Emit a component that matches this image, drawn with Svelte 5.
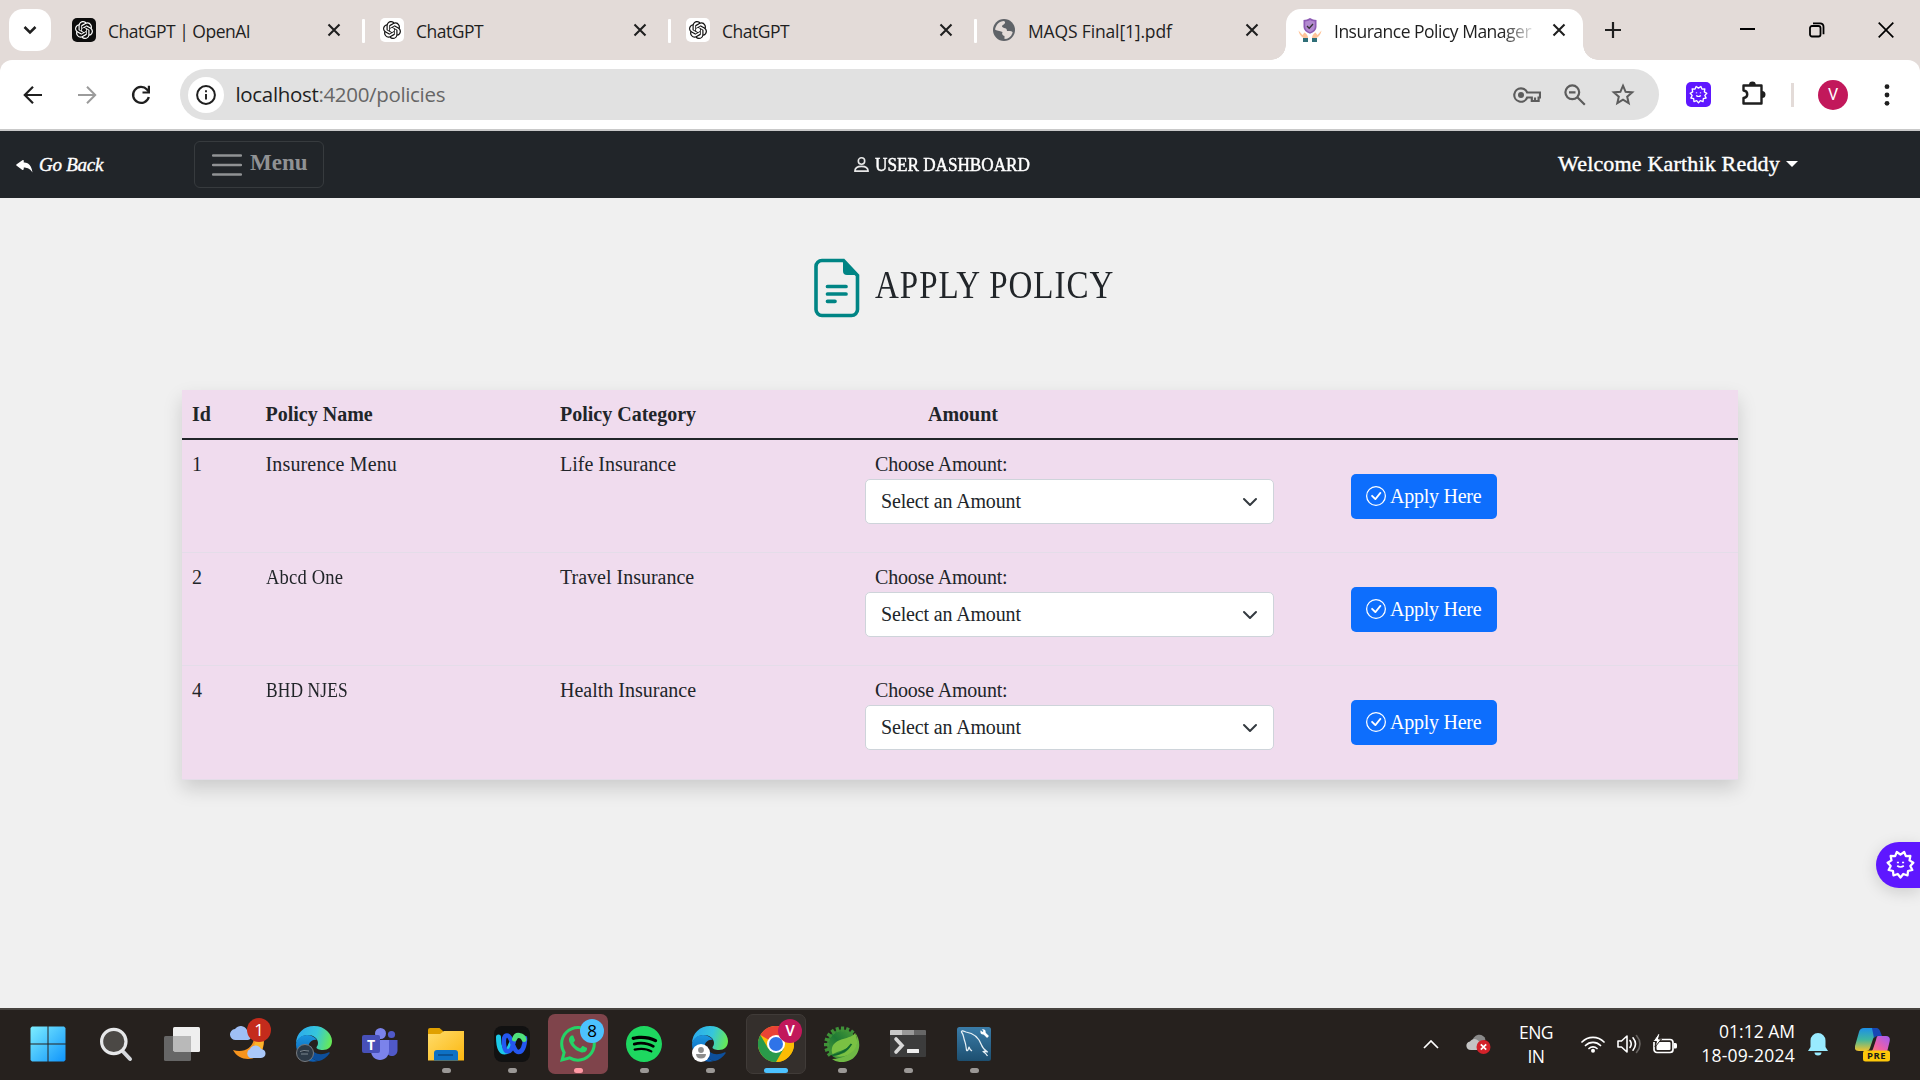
<script>
  const tabs = [
    { title: 'ChatGPT | OpenAI', icon: 'dark' },
    { title: 'ChatGPT', icon: 'light' },
    { title: 'ChatGPT', icon: 'light' },
    { title: 'MAQS Final[1].pdf', icon: 'globe' }
  ];
  const policies = [
    { id: 1, name: 'Insurence Menu', category: 'Life Insurance', condense: 1 },
    { id: 2, name: 'Abcd One', category: 'Travel Insurance', condense: 0.93 },
    { id: 4, name: 'BHD NJES', category: 'Health Insurance', condense: 0.87 }
  ];
  const openai =
    'M22.2819 9.8211a5.9847 5.9847 0 0 0-.5157-4.9108 6.0462 6.0462 0 0 0-6.5098-2.9A6.0651 6.0651 0 0 0 4.9807 4.1818a5.9847 5.9847 0 0 0-3.9977 2.9 6.0462 6.0462 0 0 0 .7427 7.0966 5.98 5.98 0 0 0 .511 4.9107 6.051 6.051 0 0 0 6.5146 2.9001A5.9847 5.9847 0 0 0 13.2599 24a6.0557 6.0557 0 0 0 5.7718-4.2058 5.9894 5.9894 0 0 0 3.9977-2.9001 6.0557 6.0557 0 0 0-.7475-7.0729zm-9.022 12.6081a4.4755 4.4755 0 0 1-2.8764-1.0408l.1419-.0804 4.7783-2.7582a.7948.7948 0 0 0 .3927-.6813v-6.7369l2.02 1.1686a.071.071 0 0 1 .038.052v5.5826a4.504 4.504 0 0 1-4.4945 4.4944zm-9.6607-4.1254a4.4708 4.4708 0 0 1-.5346-3.0137l.142.0852 4.783 2.7582a.7712.7712 0 0 0 .7806 0l5.8428-3.3685v2.3324a.0804.0804 0 0 1-.0332.0615L9.74 19.9502a4.4992 4.4992 0 0 1-6.1408-1.6464zM2.3408 7.8956a4.485 4.485 0 0 1 2.3655-1.9728V11.6a.7664.7664 0 0 0 .3879.6765l5.8144 3.3543-2.0201 1.1685a.0757.0757 0 0 1-.071 0l-4.8303-2.7865A4.504 4.504 0 0 1 2.3408 7.872zm16.5963 3.8558L13.1038 8.364 15.1192 7.2a.0757.0757 0 0 1 .071 0l4.8303 2.7913a4.4944 4.4944 0 0 1-.6765 8.1042v-5.6772a.79.79 0 0 0-.407-.667zm2.0107-3.0231l-.142-.0852-4.7735-2.7818a.7759.7759 0 0 0-.7854 0L9.409 9.2297V6.8974a.0662.0662 0 0 1 .0284-.0615l4.8303-2.7866a4.4992 4.4992 0 0 1 6.6802 4.66zM8.3065 12.863l-2.02-1.1638a.0804.0804 0 0 1-.038-.0567V6.0742a4.4992 4.4992 0 0 1 7.3757-3.4537l-.142.0805L8.704 5.459a.7948.7948 0 0 0-.3927.6813zm1.0976-2.3654l2.602-1.4998 2.6069 1.4998v2.9994l-2.5974 1.4997-2.6067-1.4997Z';
  // Rounded burst with eleven points, used by the extension badge.
  const burst = Array.from({ length: 22 }, (_, i) => {
    const a = (Math.PI * i) / 11 + Math.PI / 2;
    const r = i % 2 ? 9.6 : 12.6;
    return `${(15 + r * Math.cos(a)).toFixed(2)},${(15 + r * Math.sin(a)).toFixed(2)}`;
  }).join(' ');
  const teeth = Array.from({ length: 10 }, (_, i) => 142 + i * 18.5);
</script>

{#snippet closeIcon()}
  <svg class="x" width="14" height="14" viewBox="0 0 14 14"><path d="M1.5 1.5l11 11M12.5 1.5l-11 11" stroke="#1f1f1f" stroke-width="2.1" fill="none" /></svg>
{/snippet}

{#snippet edge(id)}
  <svg width="36" height="36" viewBox="0 0 36 36">
    <defs>
      <linearGradient id={id + 'a'} x1="0" y1=".3" x2="1" y2=".5"><stop offset="0" stop-color="#2aa9ee" /><stop offset=".55" stop-color="#36c6dc" /><stop offset="1" stop-color="#66e957" /></linearGradient>
      <linearGradient id={id + 'b'} x1="0" y1="0" x2="0" y2="1"><stop offset="0" stop-color="#1a96e0" /><stop offset="1" stop-color="#0c5bb0" /></linearGradient>
    </defs>
    <path d="M0 18C0 7 8 0 18 0c11 0 18 8 18 15 0 6-4 9-9 9-4 0-6.500-1.200-6.500-2.500 0-1 1.500-1.500 1.500-4.500 0-5-5-8-10-8C6 9 1 13 0 18z" fill="url(#{id}a)" />
    <path d="M0 18c1-6 6-9 11-9 4 0 8 2 10 5-6-1-9 4-9 9 0 7 5 11 10 12-12 3-22-5-22-17z" fill="url(#{id}b)" />
    <path d="M12.500 22c-.5 8 5 13 10.500 13 4-1 8-4 10.500-7.500.5-1-.3-1.500-1.300-1-8 3.500-16 1.500-17-6.500z" fill="#0d4f9b" />
  </svg>
{/snippet}

<div class="screen">
  <div class="tabstrip">
    <div class="search-tabs">
      <svg width="14" height="10" viewBox="0 0 14 10"><path d="M1.500 2l5.500 5.500L12.500 2" stroke="#1f1f1f" stroke-width="2.500" fill="none" /></svg>
    </div>
    {#each tabs as tab, i}
      <div class="tab" class:first={i === 0} class:pdf={tab.icon === 'globe'}>
        {#if tab.icon === 'globe'}
          <svg width="24" height="24" viewBox="0 0 24 24"><circle cx="12" cy="12" r="11" fill="#5f6368" /><path d="M12 3c2 1 1 3-1 4s-1 2 1 3c2 0 3 1 3 3h3c2 0 3 1 2.500 2C19 19 16 21 12.500 21v-3c-2-.5-3-2-2-4-3-1-6-1.500-7.500-2.500C4 7 7 3 12 3z" fill="#e3dbd8" /></svg>
        {:else}
          <svg width="24" height="24" viewBox="0 0 24 24"><rect width="24" height="24" rx="5" fill={tab.icon === 'dark' ? '#0d0d0d' : '#fff'} /><path transform="translate(3 3) scale(.75)" d={openai} fill={tab.icon === 'dark' ? '#fff' : '#111'} /></svg>
        {/if}
        <span class="title">{tab.title}</span>
        {@render closeIcon()}
        {#if i < 3}<i class="sep"></i>{/if}
      </div>
    {/each}
    <div class="tab active">
      <svg width="24" height="24" viewBox="0 0 24 24">
        <path d="M12 0c2 1.300 4 2 6.500 2v7c0 3-2.500 5.200-6.500 6.700C8 14.200 5.500 12 5.500 9V2C8 2 10 1.300 12 0z" fill="#8e5bb5" /><path d="M12 2c2 1 3 1.300 4.800 1.500V9c0 2-2 4-4.800 5.200C9.200 13 7.200 11 7.200 9V3.500C9 3.300 10 3 12 2z" fill="#b38ad0" />
        <path d="M9 8l2.200 2.200L15 6" stroke="#333" stroke-width="1.300" fill="none" />
        <path d="M.5 12.500l4 4.500 2-2.500c2 1 3.500 3 3.500 5.500H5.500C2.500 18 1 16 .5 12.500zM23.500 12.500l-4 4.500-2-2.500c-2 1-3.500 3-3.500 5.500h4.500c3-2 4.500-4 5-7.500z" fill="#ffc49a" />
        <path d="M5 20h5v4H5zM14 20h5v4h-5z" fill="#2f6f78" />
      </svg>
      <span class="title fade">Insurance Policy Manager</span>
      {@render closeIcon()}
    </div>
    <svg class="plus" width="16" height="16" viewBox="0 0 16 16"><path d="M8 0v16M0 8h16" stroke="#1f1f1f" stroke-width="2.200" /></svg>
    <div class="window-controls">
      <svg width="16" height="16" viewBox="0 0 16 16"><path d="M0 7h15" stroke="#000" stroke-width="2" /></svg>
      <svg width="16" height="16" viewBox="0 0 16 16"><rect x="1" y="4" width="10.500" height="10.500" rx="2" fill="none" stroke="#000" stroke-width="1.800" /><path d="M4 1.300h7a3.300 3.300 0 0 1 3.500 3.500v7.500" fill="none" stroke="#000" stroke-width="1.800" /></svg>
      <svg width="16" height="16" viewBox="0 0 16 16"><path d="M.7.7l14.600 14.600M15.300.7L.7 15.300" stroke="#000" stroke-width="1.700" /></svg>
    </div>
  </div>

  <div class="toolbar-bg">
    <div class="toolbar">
      <svg class="back" width="20" height="20" viewBox="0 0 20 20"><path d="M19 10H2.500M10 1.800L1.800 10l8.200 8.200" stroke="#1f1f1f" stroke-width="2.200" fill="none" /></svg>
      <svg class="fwd" width="20" height="20" viewBox="0 0 20 20"><path d="M1 10h16.500M10 1.800l8.200 8.200-8.200 8.200" stroke="#9b9b9b" stroke-width="2" fill="none" /></svg>
      <svg class="reload" width="20" height="20" viewBox="0 0 20 20"><path d="M17.800 12A8 8 0 1 1 16 4.500l1.500 1.800" stroke="#1f1f1f" stroke-width="2.300" fill="none" /><path d="M19 .8v7.700h-7.500V6.400h5.300V.8z" fill="#1f1f1f" /></svg>
      <div class="omnibox">
        <span class="info"><svg width="20" height="20" viewBox="0 0 20 20"><circle cx="10" cy="10" r="8.900" fill="none" stroke="#1f1f1f" stroke-width="2" /><path d="M10 9v5.600M10 5.200v2.100" stroke="#1f1f1f" stroke-width="1.900" /></svg></span>
        <span class="url">localhost<em>:4200/policies</em></span>
        <svg class="key" width="28" height="16" viewBox="0 0 28 16"><path d="M8 1.300a6.700 6.700 0 1 0 6.200 9.200h4.600V14h6.800v-3.500H27V5.500H14.200A6.700 6.700 0 0 0 8 1.300zM22 14v-3.500" fill="none" stroke="#5c5c5c" stroke-width="2.200" /><circle cx="8" cy="8" r="3" fill="#5c5c5c" /></svg>
        <svg class="mag" width="22" height="22" viewBox="0 0 22 22"><circle cx="8.300" cy="8.300" r="6.900" fill="none" stroke="#5c5c5c" stroke-width="2.200" /><path d="M13.300 13.300l7.500 7.500M5 8.300h6.500" stroke="#5c5c5c" stroke-width="2.200" /></svg>
        <svg class="star" width="24" height="23" viewBox="0 0 24 23"><path d="M12 2.700l2.600 6.100 6.600.6-5 4.300 1.500 6.500L12 16.700l-5.700 3.500 1.500-6.500-5-4.300 6.600-.6z" fill="none" stroke="#5c5c5c" stroke-width="2" /></svg>
      </div>
      <span class="ext"><svg width="25" height="25" viewBox="0 0 30 30"><rect width="30" height="30" rx="6" fill="#5e17ff" /><g transform="translate(3 3) scale(.8)"><polygon points={burst} fill="none" stroke="#fff" stroke-width="2" stroke-linejoin="round" /><path d="M11.500 16.500q3.500 3 7 0" stroke="#fff" stroke-width="1.800" fill="none" /><path d="M11 12.500h2M17 12.500h2" stroke="#fff" stroke-width="1.400" /></g></svg></span>
      <svg class="puzzle" width="26" height="26" viewBox="0 0 26 26"><path d="M2.500 5.500h18V23.500h-18v-5.500c5-.5 5-7 0-7.500z" fill="none" stroke="#1f1f1f" stroke-width="2.400" stroke-linejoin="round" /><path d="M8 5a3.400 3.400 0 0 1 6.800 0zM21 11a3.500 3.500 0 0 1 0 7z" fill="#1f1f1f" /></svg>
      <i class="divider"></i>
      <span class="avatar">V</span>
      <svg class="dots" width="6" height="22" viewBox="0 0 6 22"><g fill="#1f1f1f"><circle cx="3" cy="2.700" r="2.400" /><circle cx="3" cy="11" r="2.400" /><circle cx="3" cy="19.300" r="2.400" /></g></svg>
    </div>
  </div>

  <nav>
    <a class="goback" href="#back"><svg width="20" height="20" viewBox="0 0 16 16"><path fill="#fff" d="M5.921 11.900 1.353 8.620a.72.72 0 0 1 0-1.238L5.921 4.100A.716.716 0 0 1 7 4.719V6c1.500 0 6 0 7 8-2.500-4.500-7-4-7-4v1.281c0 .56-.606.898-1.079.62z" /></svg><span>Go Back</span></a>
    <button class="menu"><svg width="30" height="24" viewBox="0 0 30 24"><path d="M1 2.500h28M1 12h28M1 21.500h28" stroke="#909294" stroke-width="2.400" stroke-linecap="round" /></svg><span>Menu</span></button>
    <div class="brand"><svg width="15" height="16" viewBox="0 0 15 16"><circle cx="7.500" cy="4" r="3.200" fill="none" stroke="#e8e8e8" stroke-width="1.600" /><path d="M.9 14.200c0-3 2-4.800 6.600-4.800s6.600 1.800 6.600 4.800z" fill="none" stroke="#e8e8e8" stroke-width="1.700" stroke-linejoin="round" /></svg><span>USER DASHBOARD</span></div>
    <div class="welcome"><span>Welcome Karthik Reddy</span><svg width="12" height="6" viewBox="0 0 12 6"><path d="M0 0h12L6 6z" fill="#fff" /></svg></div>
  </nav>

  <main>
    <header class="heading">
      <svg width="46" height="60" viewBox="0 0 46 60"><path d="M8 3h21.500L43.500 18v34a6 6 0 0 1-6 6H8a6 6 0 0 1-6-6V9a6 6 0 0 1 6-6z" transform="translate(0 -.5)" fill="none" stroke="#008585" stroke-width="3.600" /><path d="M29 2v11a4 4 0 0 0 4 4h11z" fill="#008585" /><path d="M13.500 28.500h18.500M13.500 36h18.500M13.500 43.300h7.500" stroke="#008585" stroke-width="3.700" stroke-linecap="round" /></svg>
      <h1>APPLY POLICY</h1>
    </header>

    <section class="table">
      <div class="row head">
        <span>Id</span><span>Policy Name</span><span>Policy Category</span><span class="amount">Amount</span><span></span>
      </div>
      {#each policies as policy}
        <div class="row">
          <span>{policy.id}</span>
          <span><span class="name" style:--condense={policy.condense}>{policy.name}</span></span>
          <span>{policy.category}</span>
          <div class="choose">
            <span class="lbl">Choose Amount:</span>
            <div class="select"><span>Select an Amount</span><svg width="16" height="16" viewBox="0 0 16 16"><path d="M2 5l6 6 6-6" fill="none" stroke="#343a40" stroke-width="2" stroke-linecap="round" stroke-linejoin="round" /></svg></div>
          </div>
          <div class="action">
            <button class="apply"><svg width="20" height="20" viewBox="0 0 16 16" fill="#fff"><path d="M8 15A7 7 0 1 1 8 1a7 7 0 0 1 0 14m0 1A8 8 0 1 0 8 0a8 8 0 0 0 0 16" /><path d="M10.970 4.970a.235.235 0 0 0-.02.022L7.477 9.417 5.384 7.323a.75.75 0 0 0-1.060 1.060L6.970 11.030a.75.75 0 0 0 1.079-.02l3.992-4.990a.75.75 0 0 0-1.071-1.050" /></svg><span>Apply Here</span></button>
          </div>
        </div>
      {/each}
    </section>

    <div class="floater"><svg width="31" height="31" viewBox="0 0 30 30"><polygon points={burst} fill="none" stroke="#fff" stroke-width="2.200" stroke-linejoin="round" /><path d="M11.800 16.200q3.200 2.400 6.400 0" stroke="#fff" stroke-width="1.600" fill="none" /><path d="M11.500 13h2M16.500 13h2" stroke="#fff" stroke-width="1.500" /></svg></div>
  </main>

  <footer>
    <div class="app start">
      <svg width="36" height="36" viewBox="0 0 36 36"><defs><linearGradient id="win" x1="0" y1="0" x2="1" y2="1"><stop offset="0" stop-color="#7deeff" /><stop offset="1" stop-color="#0f94fb" /></linearGradient></defs><path d="M2 .5h15.500v17H.5V2zM18.500.5H34L35.500 2v15.500h-17zM.5 18.500h17v17H2L.5 34zM18.500 18.500h17V34L34 35.500H18.500z" fill="url(#win)" /></svg>
    </div>
    <div class="app">
      <svg width="36" height="36" viewBox="0 0 36 36"><path d="M24.500 25l7.500 8" stroke="#d5d8dc" stroke-width="4" stroke-linecap="round" /><circle cx="15.800" cy="15.500" r="12.200" fill="#4b4845" stroke="#e6e7e9" stroke-width="3.200" /></svg>
    </div>
    <div class="app">
      <svg width="36" height="36" viewBox="0 0 36 36"><rect x="9" y="1" width="27" height="25" rx="1.500" fill="#efefef" /><rect y="10" width="27" height="25" rx="1.500" fill="#666" /><path d="M9 10h18v16H10.500L9 24.500z" fill="#b9b9b9" /></svg>
    </div>
    <div class="app">
      <svg width="36" height="36" viewBox="0 0 36 36"><path d="M24 13c4-1 8-1 10 1 0 12-6 19-16 19-6 0-12-3-15-9 10 3 19-1 21-11z" fill="#f7941e" /><path d="M27 12h6c1 5 0 9-1 12l-8-5z" fill="#fbb52c" /><path d="M6 14a5.500 5.500 0 0 1-1-11A7 7 0 0 1 17 4c5 1 6 9 1 10z" fill="#9fbff5" /><path d="M20 32a5 5 0 0 1 0-9 6 6 0 0 1 11 0c6 0 6 9 0 9z" fill="#a9c8fa" /></svg>
      <b class="badge red">1</b>
    </div>
    <div class="app">
      {@render edge('e1')}
      <svg class="badge-pic" width="18" height="18" viewBox="0 0 18 18"><circle cx="9" cy="9" r="8.500" fill="#2d3a47" stroke="#777b80" /><path d="M4 7.500l4-1 5 .5M5 10h7" stroke="#7c8790" stroke-width="1" /></svg>
    </div>
    <div class="app">
      <svg width="36" height="36" viewBox="0 0 36 36"><circle cx="18.500" cy="7.500" r="5.500" fill="#7b83eb" /><circle cx="29.500" cy="8.500" r="3.600" fill="#5059c9" /><path d="M24 14h11.500v10c0 4-3 6-5.500 6s-6-2-6-6z" fill="#5059c9" /><path d="M9 14h18v11c0 5-4 9-9 9s-9-4-9-9z" fill="#7b83eb" /><rect y="9" width="18" height="18" rx="2" fill="#4750b8" /><text x="9" y="23.500" font-size="14" font-weight="700" text-anchor="middle" fill="#fff">T</text></svg>
    </div>
    <div class="app">
      <svg width="36" height="36" viewBox="0 0 36 36"><defs><linearGradient id="fold" x1="0" y1="0" x2="1" y2="1"><stop offset="0" stop-color="#ffdc6b" /><stop offset="1" stop-color="#fcb70f" /></linearGradient></defs><path d="M0 4q0-2 2-2h9.500l4 3.500V8H0z" fill="#e0a000" /><path d="M0 8h12l4-3h20v29.500H0z" fill="url(#fold)" /><path d="M6 34.500V27q0-3 3-3h18q3 0 3 3v7.500z" fill="#0e71c4" /><path d="M10 29h15" stroke="#0a4a86" stroke-width="1.500" /></svg>
      <i class="dot"></i>
    </div>
    <div class="app">
      <svg width="36" height="36" viewBox="0 0 36 36"><rect width="36" height="36" rx="8" fill="#111" /><path d="M4.500 11c0 10 2.500 15 6 15s5-4 7-9" fill="none" stroke="#1cc9e8" stroke-width="5" stroke-linecap="round" /><path d="M31 12c0 9-3 14-6.500 14C19 26 18 9.500 13 9.500c-3 0-3.500 4-3 9 .5 5 2 7 4 7 3 0 5-6 6-11" fill="none" stroke="#2457f0" stroke-width="4.500" stroke-linecap="round" /><path d="M20.500 13c1-3 3-4 5-3.500 2 .4 4 1.500 4.500 4" fill="none" stroke="#4fe07a" stroke-width="5" stroke-linecap="round" /></svg>
      <i class="dot"></i>
    </div>
    <div class="app">
      <div class="tile wa"><svg width="36" height="36" viewBox="0 0 16 16"><path fill="#25d366" d="M13.601 2.326A7.850 7.850 0 0 0 7.994 0C3.627 0 .068 3.558.064 7.926c0 1.399.366 2.760 1.057 3.965L0 16l4.204-1.102a7.900 7.900 0 0 0 3.790.965h.004c4.368 0 7.926-3.558 7.930-7.930A7.900 7.900 0 0 0 13.600 2.326zM7.994 14.521a6.600 6.600 0 0 1-3.356-.92l-.24-.144-2.494.654.666-2.433-.156-.251a6.560 6.560 0 0 1-1.007-3.505c0-3.626 2.957-6.584 6.591-6.584a6.560 6.560 0 0 1 4.660 1.931 6.560 6.560 0 0 1 1.928 4.660c-.004 3.639-2.961 6.592-6.592 6.592m3.615-4.934c-.197-.099-1.170-.578-1.353-.646-.182-.065-.315-.099-.445.099-.133.197-.513.646-.627.775-.114.133-.232.148-.43.05-.197-.1-.836-.308-1.592-.985-.59-.525-.985-1.175-1.103-1.372-.114-.198-.011-.304.088-.403.087-.088.197-.232.296-.346.1-.114.133-.198.198-.33.065-.134.034-.248-.015-.347-.05-.099-.445-1.076-.612-1.470-.16-.389-.323-.335-.445-.34-.114-.007-.247-.007-.38-.007a.73.73 0 0 0-.529.247c-.182.198-.691.677-.691 1.654s.71 1.916.81 2.049c.098.133 1.394 2.132 3.383 2.992.47.205.84.326 1.129.418.475.152.904.129 1.246.08.38-.058 1.171-.48 1.338-.943.164-.464.164-.86.114-.943-.049-.084-.182-.133-.38-.232" /></svg></div>
      <b class="badge blue">8</b>
      <i class="dot pink"></i>
    </div>
    <div class="app">
      <svg width="36" height="36" viewBox="0 0 24 24"><circle cx="12" cy="12" r="11" fill="#000" /><path fill="#1ed760" d="M12 0C5.400 0 0 5.400 0 12s5.400 12 12 12 12-5.400 12-12S18.660 0 12 0zm5.521 17.340c-.24.359-.66.48-1.021.24-2.820-1.740-6.360-2.101-10.561-1.141-.418.122-.779-.179-.899-.539-.12-.421.18-.78.54-.9 4.560-1.021 8.520-.6 11.640 1.320.42.18.479.659.301 1.020zm1.440-3.300c-.301.42-.841.6-1.262.3-3.239-1.980-8.159-2.580-11.939-1.380-.479.12-1.020-.12-1.140-.6-.12-.48.12-1.021.6-1.141C9.600 9.900 15 10.561 18.720 12.840c.361.181.54.78.241 1.200zm.12-3.360C15.240 8.400 8.820 8.160 5.160 9.301c-.6.179-1.200-.181-1.380-.721-.18-.601.18-1.200.72-1.381 4.260-1.260 11.280-1.020 15.721 1.621.539.3.719 1.020.419 1.560-.299.421-1.020.599-1.559.3z" /></svg>
      <i class="dot"></i>
    </div>
    <div class="app">
      {@render edge('e2')}
      <svg class="badge-pic" width="18" height="18" viewBox="0 0 18 18"><circle cx="9" cy="9" r="9" fill="#fff" /><circle cx="9" cy="6" r="2.900" fill="#8d8d8d" /><path d="M4 10h10c0 3-2 4.500-5 4.500S4 13 4 10z" fill="#8d8d8d" /></svg>
      <i class="dot"></i>
    </div>
    <div class="app">
      <div class="tile chrome"><svg width="36" height="36" viewBox="0 0 36 36"><circle cx="18" cy="18" r="18" fill="#fbbc04" /><path d="M18 18L2.400 9A18 18 0 0 1 33.600 9z" fill="#ea4335" /><path d="M18 9h15.600A18 18 0 0 1 18 36l7.800-13.500z" fill="#fbbc04" /><path d="M2.400 9A18 18 0 0 0 18 36l7.800-13.500H10.200z" fill="#2a9a4a" /><circle cx="18" cy="18" r="9" fill="#fff" /><circle cx="18" cy="18" r="7" fill="#2f73e8" /></svg></div>
      <b class="badge magenta">V</b>
      <i class="dot wide"></i>
    </div>
    <div class="app">
      <svg width="36" height="36" viewBox="0 0 36 36">
        <defs><linearGradient id="spr" x1="1" y1="0" x2="0" y2="1"><stop offset="0" stop-color="#4f9f38" /><stop offset=".5" stop-color="#1f7a35" /><stop offset="1" stop-color="#4f9f38" /></linearGradient></defs>
        <circle cx="18" cy="18.500" r="15" fill="url(#spr)" />
        {#each teeth as a}<rect x="31" y="17" width="5" height="3.200" transform="rotate({a} 18 18.500)" fill="#3f9238" />{/each}
        <path d="M31 6.500C37 14 37 26 29 32.500 22 37.500 13 37 8 33c10 0 20-5 24-13 1.500-4 1-9-1-13.500z" fill="#6fb845" />
        <path d="M31 7c-4 7-20 4-23 15-.7 3 0 5 .8 6.500 1.500-3 13-3 18.700-10.500C25 26 17 29 10.500 30c11 3 21-4 22.500-12 .6-4-.5-8-2-11z" fill="#7ac143" />
        <path d="M8 29.500c6-1 14-3.500 19.500-11.500" fill="none" stroke="#11682f" stroke-width="1.700" />
      </svg>
      <i class="dot"></i>
    </div>
    <div class="app">
      <svg width="36" height="36" viewBox="0 0 36 36"><path d="M0 5q0-1 1-1h34q1 0 1 1v4H0z" fill="#666" /><path d="M0 5q0-1 1-1h11v5H0z" fill="#c9c9c9" /><path d="M12 4h12v5H12z" fill="#999" /><path d="M0 9h36v21q0 1-1 1H1q-1 0-1-1z" fill="#3c3c3c" /><path d="M6 13l6 6.500L6 26" stroke="#d9d9d9" stroke-width="3.600" fill="none" stroke-linecap="round" /><rect x="17" y="23" width="12" height="4" rx=".5" fill="#efefef" /></svg>
      <i class="dot"></i>
    </div>
    <div class="app">
      <svg width="36" height="36" viewBox="0 0 36 36"><defs><linearGradient id="my" x1="0" y1="0" x2="0" y2="1"><stop offset="0" stop-color="#3a7ca8" /><stop offset="1" stop-color="#1d4f70" /></linearGradient></defs><rect x="1" y="1" width="34" height="34" rx="2.500" fill="url(#my)" /><path d="M31.500 30c-1-2-2-3-4.500-4.500 1-.3 2.500-.3 4.500.5-3-2-5-4-6-7C23 12 17 7 10 6c-2-.7-5-2-4.500 0C8 9 7 11 9 16c1 3 1 5 1.500 8 .5 1.500 1.500.5 2-1.500L13 21c.5 2 1.500 3 3 4" fill="none" stroke="#e8f1f6" stroke-width="1.200" stroke-linejoin="round" /><path d="M27 6l5 5" stroke="#fff" stroke-width="2.600" /><circle cx="27" cy="5.800" r="2.600" fill="#fff" /><path d="M24.500 3l2.500 2.500" stroke="#3a7ca8" stroke-width="1.500" /></svg>
      <i class="dot"></i>
    </div>

    <div class="tray">
      <svg class="up" width="16" height="9" viewBox="0 0 16 9"><path d="M1 8l7-7 7 7" fill="none" stroke="#fff" stroke-width="1.700" /></svg>
      <svg class="cloud" width="25" height="22" viewBox="0 0 25 22"><path d="M6 9C7 1 17-1 19.500 6.500L12 13z" fill="#8a8a8a" /><path d="M5 17C-1 17-1 9 4 8.500 6 5 11 5 13 8.500l6 2.500v6z" fill="#c4c4c4" /><circle cx="17.500" cy="14" r="7" fill="#d3222a" /><path d="M14.800 11.300l5.400 5.400M20.200 11.300l-5.400 5.400" stroke="#fff" stroke-width="1.700" /></svg>
      <div class="lang"><span>ENG</span><span>IN</span></div>
      <svg class="wifi" width="24" height="18" viewBox="0 0 24 18"><g fill="none" stroke="#fff" stroke-width="1.700" stroke-linecap="round"><path d="M1 7a15.500 15.500 0 0 1 22 0M4.500 10.500a10.600 10.600 0 0 1 15 0M8 13.500a5.800 5.800 0 0 1 8 0" /></g><circle cx="12" cy="15.700" r="2" fill="#fff" /></svg>
      <svg class="vol" width="24" height="20" viewBox="0 0 24 20"><g fill="none" stroke="#fff" stroke-width="1.600" stroke-linejoin="round" stroke-linecap="round"><path d="M1 7h3.500L10 2v16l-5.500-5H1z" /><path d="M13 6.500q2.500 3.500 0 7M16 3.800q5 6.200 0 12.400" /><path d="M19.500 1.500q7 8.500 0 17" stroke="#66625f" /></g></svg>
      <svg class="bat" width="25" height="20" viewBox="0 0 25 20"><rect x="1" y="5.500" width="19" height="13" rx="3" fill="none" stroke="#fff" stroke-width="1.700" /><rect x="3.500" y="8" width="14" height="8" rx="1" fill="#fff" /><path d="M21 9h1.500q1.500 0 1.500 1.500v2.500q0 1.500-1.500 1.500H21z" fill="#fff" /><path d="M5.500-.5L0 7.500h3.500L2 13l6.500-8H5.500L7-.5z" fill="#fff" stroke="#26211e" stroke-width="1" /></svg>
      <div class="clock"><span>01:12 AM</span><span class="date">18-09-2024</span></div>
      <svg class="bell" width="20" height="24" viewBox="0 0 20 24"><path d="M10 1a7.500 7.500 0 0 1 7.500 7.500v6.500l2.500 4H0l2.500-4V8.500A7.500 7.500 0 0 1 10 1zM6.500 20.500h7a3.500 3 0 0 1-7 0z" fill="#99ebff" /></svg>
      <svg class="copilot" width="35" height="35" viewBox="0 0 35 35"><defs><linearGradient id="cp1" x1="0" y1="0" x2="0" y2="1"><stop offset="0" stop-color="#1d8fe8" /><stop offset=".5" stop-color="#3fb6a0" /><stop offset="1" stop-color="#f2c32c" /></linearGradient><linearGradient id="cp2" x1="1" y1="0" x2="0" y2="1"><stop offset="0" stop-color="#a05cf5" /><stop offset=".6" stop-color="#ee5fa8" /><stop offset="1" stop-color="#ff8a5c" /></linearGradient></defs><path d="M9 1h11q3 0 4 3l2 5h-4q-3 0-4 3l-3 9q-1 3-4 3H4q-5 0-4-5L4 5q1-4 5-4z" fill="url(#cp1)" /><path d="M17 1h4q3 0 4 3l2 5h-4q-3 0-4 2z" fill="#1747b5" /><path d="M23 9h8q5 0 3.500 6l-2.500 10H14q3 0 4-3l3-9q.8-4 2-4z" fill="url(#cp2)" /><rect x="8" y="23.500" width="27" height="11" rx="2.500" fill="#fdc80a" /><text x="21.500" y="32.300" font-size="9.500" font-weight="700" text-anchor="middle" letter-spacing=".4" fill="#1a1a1a">PRE</text></svg>
    </div>
  </footer>
</div>

<style>
  :global(body) { margin: 0; overflow: hidden; }
  .screen { width: 1920px; height: 1080px; display: flex; flex-direction: column; background: #f0f0f0; font-family: 'Open Sans', 'Noto Sans', sans-serif; color: #212529; overflow: hidden; }
  svg { display: block; flex: none; }
  button { font: inherit; cursor: pointer; margin: 0; }

  .tabstrip { height: 60px; flex: none; background: #e3dbd8; display: flex; align-items: flex-end; }
  .search-tabs { width: 42px; height: 42px; margin: 0 0 9px 9px; border-radius: 14px; background: #fff; display: flex; align-items: center; justify-content: center; }
  .tab { width: 306px; height: 51px; box-sizing: border-box; padding: 0 0 9px 17px; display: flex; align-items: center; flex: none; position: relative; }
  .tab.first { margin-left: 6px; padding-left: 15px; }
  .title { width: 212px; margin: 1px 0 0 12px; font-size: 17.5px; letter-spacing: -0.5px; line-height: 24px; white-space: nowrap; color: #1f1f1f; }
  .first .title { width: 219px; }
  .pdf .title { letter-spacing: -0.15px; }
  .x { margin-left: auto; margin-right: 22px; }
  .sep { width: 3px; height: 24px; background: #fff; position: absolute; right: -2px; top: 10px; border-radius: 1px; }
  .tab.active { width: 297px; background: #fff; border-radius: 15px 15px 0 0; padding-left: 12px; margin-left: 5px; }
  .tab.active::before, .tab.active::after { content: ''; position: absolute; bottom: 0; width: 15px; height: 15px; }
  .tab.active::before { left: -15px; background: radial-gradient(circle at 0 0, transparent 14.5px, #fff 15px); }
  .tab.active::after { right: -15px; background: radial-gradient(circle at 100% 0, transparent 14.5px, #fff 15px); }
  .tab.active .x { margin-right: 17px; }
  .title.fade { width: 202px; -webkit-mask-image: linear-gradient(90deg, #000 168px, transparent 203px); mask-image: linear-gradient(90deg, #000 168px, transparent 203px); }
  .plus { margin: 0 0 22px 22px; }
  .window-controls { display: flex; gap: 53px; margin: 0 26px 22px auto; }

  .toolbar-bg { height: 71px; flex: none; box-sizing: border-box; background: #e3dbd8; }
  .toolbar { height: 71px; box-sizing: border-box; background: #fff; border-bottom: 2px solid #c9c9c9; border-radius: 12px 12px 0 0; display: flex; align-items: center; padding: 0 30px 0 23px; }
  .fwd { margin-left: 34px; }
  .reload { margin-left: 34px; }
  .omnibox { margin-left: 29px; width: 1479px; height: 51px; box-sizing: border-box; border-radius: 26px; background: #e1e1e1; display: flex; align-items: center; padding: 0 24px 0 8px; }
  .info { width: 36px; height: 36px; border-radius: 50%; background: #fff; display: flex; align-items: center; justify-content: center; }
  .url { margin: -2px auto 0 11.5px; font-size: 20.5px; letter-spacing: -0.33px; color: #1f1f1f; }
  .url em { font-style: normal; color: #666; }
  .mag { margin-left: 23px; }
  .star { margin-left: 25px; }
  .ext { margin-left: 27px; }
  .puzzle { margin-left: 30px; margin-bottom: 3px; }
  .divider { width: 3px; height: 24px; margin-left: 24px; background: #e3dbd8; }
  .avatar { width: 30px; height: 30px; margin-left: 24px; border-radius: 50%; background: #c2185b; color: #fff; font: 16px/30px Roboto, sans-serif; text-align: center; }
  .dots { margin-left: auto; }

  nav { height: 67px; flex: none; background: #212529; color: #fff; display: flex; align-items: center; font-family: 'Liberation Serif', serif; padding-left: 15px; }
  nav span { display: inline-block; white-space: nowrap; }
  .goback { display: flex; align-items: center; width: 179px; color: #fff; text-decoration: none; font-size: 19px; font-style: italic; -webkit-text-stroke: 0.4px #fff; }
  .goback span { margin-left: 4px; letter-spacing: -0.25px; }
  .menu { width: 130px; height: 47px; box-sizing: border-box; border: 1.500px solid #373b3e; border-radius: 6px; background: none; padding: 0 0 0 17px; display: flex; align-items: center; color: #909294; font-size: 23px; font-weight: 700; }
  .menu span { margin: -3px 0 0 8px; }
  .brand { margin-left: 530px; display: flex; align-items: center; font-size: 19.500px; -webkit-text-stroke: 0.5px #fff; }
  .brand span { margin-left: 6px; width: 154px; transform: scaleX(0.88); transform-origin: 0 50%; }
  .welcome { margin: -2px 0 0 529px; display: flex; align-items: center; gap: 6px; font-size: 22px; letter-spacing: 0.18px; -webkit-text-stroke: 0.4px #fff; }

  main { flex: 1; display: flex; flex-direction: column; font-family: 'Liberation Serif', serif; position: relative; }
  .heading { display: flex; margin: 60px 0 0 814px; height: 60px; align-items: center; }
  h1 { margin: -6px 0 0 15px; font-size: 40px; font-weight: 400; line-height: 48px; letter-spacing: 1.200px; transform: scaleX(0.825); transform-origin: 0 50%; white-space: nowrap; }
  .table { margin: 72px 0 0 182px; width: 1556px; background: #f0dcee; box-shadow: 0 9px 18px rgba(0, 0, 0, 0.15); font-size: 20px; line-height: 29px; }
  .row { display: grid; grid-template-columns: 73.500px 294.500px 315px 476px 1fr; height: 113px; box-sizing: border-box; border-bottom: 1px solid #e4dde9; padding-top: 10px; }
  .row:last-child { height: 114px; }
  .row > span { padding-left: 10px; }
  .head { height: 50px; border-bottom: 2px solid #212529; font-weight: 700; }
  .head .amount { padding-left: 63px; }
  .name { display: inline-block; letter-spacing: 0.15px; transform: scaleX(var(--condense)); transform-origin: 0 50%; white-space: nowrap; }
  .choose { display: flex; flex-direction: column; }
  .lbl { padding-left: 10px; letter-spacing: -0.18px; height: 29px; }
  .select { width: 409px; height: 45px; box-sizing: border-box; background: #fff; border: 1px solid #ced4da; border-radius: 5px; display: flex; align-items: center; justify-content: space-between; padding: 0 15px; letter-spacing: -0.15px; }
  .action { padding: 24px 0 0 10px; }
  .apply { width: 146px; height: 45px; box-sizing: border-box; border: 0; border-radius: 5px; background: #0d6efd; color: #fff; display: flex; align-items: center; gap: 4px; padding: 0 0 0 15px; letter-spacing: -0.25px; }
  .apply svg { margin-bottom: 2px; }
  .floater { position: absolute; right: 0; top: 644px; width: 44px; height: 46px; box-sizing: border-box; padding: 7px 0 0 9px; background: #5e17ff; border-radius: 23px 0 0 23px; box-shadow: 0 4px 16px rgba(0, 0, 0, 0.15); }

  footer { height: 72px; flex: none; box-sizing: border-box; border-top: 2px solid #474340; background: #26211e; display: flex; color: #fff; }
  .app { width: 66px; height: 70px; position: relative; display: flex; align-items: center; justify-content: center; }
  .app.start { margin: 0 2px 0 15px; }
  .app > svg { margin-bottom: 2px; }
  .tile { width: 60px; height: 60px; box-sizing: border-box; border-radius: 7px; display: flex; align-items: center; justify-content: center; margin-bottom: 2px; }
  .wa { background: #7f444b; }
  .chrome { background: #342f2c; border: 1px solid #403b38; }
  .badge { position: absolute; left: 35px; top: 9px; width: 24px; height: 24px; border-radius: 50%; font-weight: 400; font-size: 17px; line-height: 23px; text-align: center; }
  .red { left: 32px; top: 8px; background: #c42b1c; }
  .blue { background: #4cc2ff; color: #000; }
  .magenta { background: #c2185b; font: 500 15px/24px Roboto, sans-serif; }
  .app > .badge-pic { position: absolute; left: 15px; top: 34px; margin: 0; }
  .dot { position: absolute; left: 29px; top: 58px; width: 9px; height: 5px; border-radius: 3px; background: #9b9896; }
  .pink { background: #ff99a4; }
  .wide { left: 21px; width: 24px; background: #4cc2ff; }
  .tray { margin-left: auto; margin-right: 30px; display: flex; align-items: center; font-size: 17.500px; height: 70px; }
  .tray > svg { margin-bottom: 2px; }
  .cloud { margin-left: 27px; }
  .lang, .clock { display: flex; flex-direction: column; line-height: 24px; margin-bottom: 2px; }
  .lang { width: 36px; margin-left: 27px; text-align: center; letter-spacing: -0.5px; }
  .wifi { margin-left: 27px; }
  .vol { margin-left: 12px; }
  .bat { margin-left: 12px; }
  .clock { width: 96px; margin-left: 21px; margin-bottom: 4px; letter-spacing: 0; align-items: flex-end; white-space: nowrap; }
  .date { letter-spacing: 0.25px; }
  .bell { margin-left: 13px; }
  .copilot { margin-left: 27px; }
</style>
